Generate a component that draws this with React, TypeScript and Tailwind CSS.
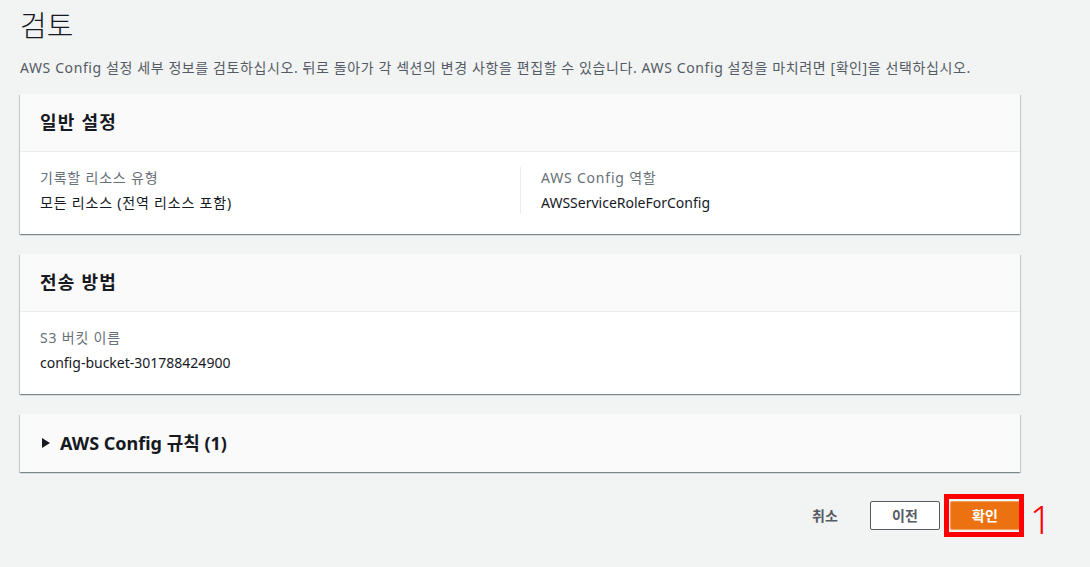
import React from "react";

const font = "font-['Noto_Sans','Noto_Sans_CJK_KR',sans-serif]";
const cardShadow =
  "shadow-[0_1px_1px_0_rgba(0,28,36,0.3),1px_1px_1px_0_rgba(0,28,36,0.15),-1px_1px_1px_0_rgba(0,28,36,0.15)]";

function Card({ title, children }: { title: React.ReactNode; children?: React.ReactNode }) {
  return (
    <div className={`bg-white ${cardShadow}`}>
      <div className={`h-[58px] flex items-center px-[20px] bg-[#fafafa] ${children ? "border-b border-[#eaeded]" : ""}`}>
        {title}
      </div>
      {children}
    </div>
  );
}

function Field({ label, value, latin }: { label: string; value: string; latin?: boolean }) {
  return (
    <div className="flex flex-col gap-[3px]">
      <div className="text-[14px] leading-[22px] text-[#687078] tracking-[0.8px]">{label}</div>
      <div className={`text-[14px] leading-[22px] text-[#16191f] ${latin ? "" : "tracking-[0.8px]"}`}>{value}</div>
    </div>
  );
}

export default function App() {
  return (
    <div className={`min-h-[567px] bg-[#f2f3f3] px-[20px] ${font} relative`}>
      <h1 className="pt-[8px] text-[29px] leading-[36px] font-light text-[#16191f]">검토</h1>
      <p className="mt-[13px] text-[14px] leading-[22px] text-[#545b64] tracking-[0.6px]">
        AWS Config 설정 세부 정보를 검토하십시오. 뒤로 돌아가 각 섹션의 변경 사항을 편집할 수 있습니다. AWS Config 설정을 마치려면 [확인]을 선택하십시오.
      </p>

      <div className="mt-[15px] w-[1000px] flex flex-col gap-[20px]">
        <Card title={<h2 className="text-[18px] font-bold text-[#16191f] tracking-[1.2px]">일반 설정</h2>}>
          <div className="grid grid-cols-2 px-[20px] pt-[15px] pb-[20px]">
            <Field label="기록할 리소스 유형" value="모든 리소스 (전역 리소스 포함)" />
            <div className="border-l border-[#eaeded] pl-[20px]">
              <Field label="AWS Config 역할" value="AWSServiceRoleForConfig" latin />
            </div>
          </div>
        </Card>

        <Card title={<h2 className="text-[18px] font-bold text-[#16191f] tracking-[1.2px]">전송 방법</h2>}>
          <div className="px-[20px] pt-[15px] pb-[20px]">
            <Field label="S3 버킷 이름" value="config-bucket-301788424900" latin />
          </div>
        </Card>

        <Card
          title={
            <div className="flex items-center">
              <svg width="8" height="10" viewBox="0 0 8 10" className="ml-[2px] mr-[10px]">
                <path d="M0 0 L8 5 L0 10 Z" fill="#16191f" />
              </svg>
              <h2 className="text-[18px] font-bold text-[#16191f]">AWS Config 규칙 (1)</h2>
            </div>
          }
        />
      </div>

      <div className="mt-[29px] w-[1000px] flex justify-end gap-[10px]">
        <button className="w-[70px] h-[29px] text-[14px] font-bold text-[#545b64] text-center">취소</button>
        <button className="w-[70px] h-[29px] text-[14px] font-bold text-[#545b64] bg-white border border-[#545b64] rounded-[2px]">
          이전
        </button>
        <div className="relative">
          <button className="w-[70px] h-[29px] text-[14px] font-bold text-white bg-[#ec7211] border border-[#f0a060] rounded-[2px]">
            확인
          </button>
          <div className="absolute left-[-6px] top-[-7px] w-[80px] h-[43px] border-[5px] border-[#ff0000] pointer-events-none" />
          <div className="absolute left-[80px] top-[-1px] text-[38px] leading-[38px] font-light text-[#ff0000]">1</div>
        </div>
      </div>
    </div>
  );
}
